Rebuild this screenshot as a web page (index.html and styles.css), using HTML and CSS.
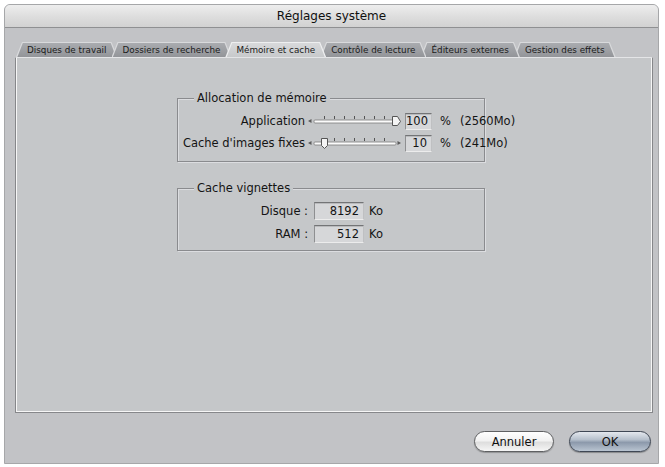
FILE: index.html
```html
<!DOCTYPE html>
<html lang="fr">
<head>
<meta charset="utf-8">
<title>Réglages système</title>
<link rel="stylesheet" href="styles.css">
</head>
<body>
<div class="window">
  <div class="titlebar">Réglages système</div>
  <div class="content">
    <div class="tabs">
      <div class="tab t1"><span>Disques de travail</span></div>
      <div class="tab t2"><span>Dossiers de recherche</span></div>
      <div class="tab t3 selected"><span>Mémoire et cache</span></div>
      <div class="tab t4"><span>Contrôle de lecture</span></div>
      <div class="tab t5"><span>Éditeurs externes</span></div>
      <div class="tab t6"><span>Gestion des effets</span></div>
    </div>
    <div class="panel">
      <fieldset class="group g1">
        <legend>Allocation de mémoire</legend>
        <div class="row">
          <span class="lbl">Application</span>
          <svg class="slider" width="96" height="16" viewBox="0 0 96 16">
            <polygon points="1,8 4.5,6 4.5,10" fill="#5a5a5a"/>
            <rect x="7" y="7" width="82" height="3" rx="1" fill="#fbfbfb" stroke="#7c7c7c" stroke-width="0.8"/>
            <g stroke="#555" stroke-width="1">
              <line x1="17.5" y1="3" x2="17.5" y2="6"/>
              <line x1="27.5" y1="3" x2="27.5" y2="6"/>
              <line x1="37.5" y1="3" x2="37.5" y2="6"/>
              <line x1="47.5" y1="3" x2="47.5" y2="6"/>
              <line x1="57.5" y1="3" x2="57.5" y2="6"/>
              <line x1="67.5" y1="3" x2="67.5" y2="6"/>
              <line x1="77.5" y1="3" x2="77.5" y2="6"/>
            </g>
            <path d="M85.5 3.5 H90.5 L93.5 8.5 L90.5 12.5 H85.5 Z" fill="#f4f4f4" stroke="#555" stroke-width="1"/>
          </svg>
          <span class="field fsmall">100</span>
          <span class="unit">%</span>
          <span class="size">(2560Mo)</span>
        </div>
        <div class="row">
          <span class="lbl">Cache d'images fixes</span>
          <svg class="slider" width="96" height="16" viewBox="0 0 96 16">
            <polygon points="1,8 4.5,6 4.5,10" fill="#5a5a5a"/>
            <rect x="7" y="7" width="82" height="3" rx="1" fill="#fbfbfb" stroke="#7c7c7c" stroke-width="0.8"/>
            <g stroke="#555" stroke-width="1">
              <line x1="27.5" y1="3" x2="27.5" y2="6"/>
              <line x1="37.5" y1="3" x2="37.5" y2="6"/>
              <line x1="47.5" y1="3" x2="47.5" y2="6"/>
              <line x1="57.5" y1="3" x2="57.5" y2="6"/>
              <line x1="67.5" y1="3" x2="67.5" y2="6"/>
              <line x1="77.5" y1="3" x2="77.5" y2="6"/>
            </g>
            <polygon points="94,8 90.5,6 90.5,10" fill="#5a5a5a"/>
            <path d="M14.5 3.5 H20.5 V10.5 L17.5 13.5 L14.5 10.5 Z" fill="#f4f4f4" stroke="#555" stroke-width="1"/>
          </svg>
          <span class="field fsmall">10</span>
          <span class="unit">%</span>
          <span class="size">(241Mo)</span>
        </div>
      </fieldset>
      <fieldset class="group g2">
        <legend>Cache vignettes</legend>
        <div class="row row2">
          <span class="lbl lbl2">Disque :</span>
          <span class="field fwide">8192</span>
          <span class="ko">Ko</span>
        </div>
        <div class="row row2">
          <span class="lbl lbl2">RAM :</span>
          <span class="field fwide">512</span>
          <span class="ko">Ko</span>
        </div>
      </fieldset>
    </div>
    <div class="buttons">
      <button class="btn cancel">Annuler</button>
      <button class="btn default">OK</button>
    </div>
  </div>
</div>
</body>
</html>
```

FILE: styles.css
```css
html, body {
  margin: 0;
  padding: 0;
  background: #ffffff;
}

body {
  font-family: "DejaVu Sans", "Liberation Sans", sans-serif;
  color: #141414;
}

.window {
  margin: 4px 0 0 4px;
  width: 655px;
  height: 460px;
  box-sizing: border-box;
  border: 1px solid #a6a7a9;
  border-radius: 6px 6px 0 0;
  background: #c2c3c6;
  display: flex;
  flex-direction: column;
  overflow: hidden;
}

.titlebar {
  height: 22px;
  flex: none;
  border-bottom: 1px solid #8f9092;
  background: linear-gradient(#eeeeee, #dedede 50%, #d2d2d2);
  text-align: center;
  font-size: 12px;
  line-height: 22px;
  color: #101010;
}

.content {
  padding: 14px 0 0 10px;
  display: flex;
  flex-direction: column;
}

/* Tabs */
.tabs {
  display: flex;
  height: 15px;
  margin-left: 1px;
}

.tab {
  position: relative;
  height: 15px;
  padding: 0 11px;
  margin-left: -6px;
  background: #d9dadc;
  clip-path: polygon(0 100%, 6px 0, calc(100% - 6px) 0, 100% 100%);
  font-size: 8.8px;
  line-height: 16px;
  color: #1a1a1a;
  white-space: nowrap;
}

.tab::before {
  content: "";
  position: absolute;
  inset: 0;
  background: linear-gradient(#abadb1, #939599);
  clip-path: polygon(1.4px 100%, 6.8px 1px, calc(100% - 6.8px) 1px, calc(100% - 1.4px) 100%);
  z-index: -1;
}

.tab span {
  position: relative;
}

.t1 { margin-left: 0; z-index: 1; }
.t2 { z-index: 2; }
.t3 { z-index: 10; }
.t4 { z-index: 5; }
.t5 { z-index: 4; }
.t6 { z-index: 3; }

.tab.selected {
  background: #eeeff0;
}

.tab.selected::before {
  background: linear-gradient(#d9dadc, #c7c9cb);
}

/* Panel */
.panel {
  width: 638px;
  height: 356px;
  box-sizing: border-box;
  border: 1px solid #86878a;
  border-top-color: #e4e5e7;
  box-shadow: inset 1px 0 #f6f6f6, inset -1px 0 #f6f6f6, inset 0 -1px #f6f6f6;
  background: #c5c7c9;
  padding-top: 33px;
}

.group {
  margin: 0 0 0 161px;
  width: 308px;
  box-sizing: border-box;
  min-inline-size: 0;
  border: 1px solid #8a8b8e;
  box-shadow: inset 1px 1px 0 #dcdde0, 1px 1px 0 #dcdde0;
  padding: 5px 0 7px 4px;
  font-size: 11.5px;
}

.group legend {
  margin-left: 12px;
  padding: 0 3px;
  line-height: 14px;
  background: #c5c7c9;
}

.g2 {
  margin-top: 19px;
  padding: 4px 0 5px 4px;
}

.row {
  display: flex;
  align-items: center;
  height: 22px;
  white-space: nowrap;
}

.row2 {
  height: 23px;
}

.lbl {
  width: 123px;
  flex: none;
  text-align: right;
}

.lbl2 {
  width: 126px;
}

.slider {
  flex: none;
  margin-left: 2px;
  display: block;
}

.field {
  flex: none;
  box-sizing: border-box;
  background: #d6d7d9;
  border-top: 1px solid #737476;
  border-left: 1px solid #8e8f91;
  border-right: 1px solid #bfc0c2;
  border-bottom: 1px solid #ececec;
  box-shadow: inset 0 1px 0 #b9babc;
  text-align: right;
  padding-right: 4px;
}

.fsmall {
  width: 27px;
  height: 17px;
  line-height: 15px;
  margin-left: 2px;
}

.fwide {
  width: 50px;
  height: 18px;
  line-height: 16px;
  margin-left: 6px;
}

.unit {
  margin-left: 8px;
}

.size {
  margin-left: 9px;
}

.ko {
  margin-left: 5px;
}

/* Buttons */
.buttons {
  display: flex;
  justify-content: flex-end;
  gap: 15px;
  margin-top: 18px;
  margin-right: 7px;
}

.btn {
  height: 21px;
  box-sizing: border-box;
  border-radius: 11px;
  font-family: "DejaVu Sans", "Liberation Sans", sans-serif;
  font-size: 11.5px;
  line-height: 18px;
  padding: 0;
  color: #101010;
}

.cancel {
  width: 80px;
  border: 1px solid #5f6062;
  background: linear-gradient(#ffffff, #f2f2f2 45%, #dedede 55%, #f6f6f6);
  box-shadow: 0 1px 1px rgba(0, 0, 0, 0.25);
}

.default {
  width: 82px;
  border: 1px solid #3f4754;
  background: linear-gradient(#e4e8ee, #b6c0cc 40%, #8c99ab 55%, #b9c4d1);
  box-shadow: 0 1px 1px rgba(0, 0, 0, 0.3);
}
```
